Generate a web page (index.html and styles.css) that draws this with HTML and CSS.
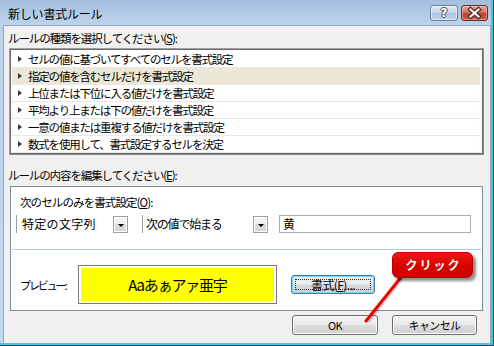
FILE: index.html
```html
<!DOCTYPE html>
<html lang="ja">
<head>
<meta charset="utf-8">
<title>新しい書式ルール</title>
<link rel="stylesheet" href="styles.css">
</head>
<body>
<div class="window">
  <div class="titlebar">
    <span class="title">新しい書式ルール</span>
    <div class="tb-buttons">
      <span class="tb-help">?</span>
      <span class="tb-close">
        <svg width="27" height="16" viewBox="0 0 27 16">
          <path d="M9.5 4.5 L17.5 11.5 M17.5 4.5 L9.5 11.5" stroke="#4a2a26" stroke-width="4.5" stroke-linecap="square" fill="none"/>
          <path d="M9.5 4.5 L17.5 11.5 M17.5 4.5 L9.5 11.5" stroke="#ffffff" stroke-width="2.2" stroke-linecap="square" fill="none"/>
        </svg>
      </span>
    </div>
  </div>
  <div class="client">
    <div class="label l1">ルールの種類を選択してください(<u>S</u>):</div>
    <div class="listbox">
      <div class="row"><span class="tri"></span>セルの値に基づいてすべてのセルを書式設定</div>
      <div class="row sel"><span class="tri"></span>指定の値を含むセルだけを書式設定</div>
      <div class="row"><span class="tri"></span>上位または下位に入る値だけを書式設定</div>
      <div class="row"><span class="tri"></span>平均より上または下の値だけを書式設定</div>
      <div class="row"><span class="tri"></span>一意の値または重複する値だけを書式設定</div>
      <div class="row"><span class="tri"></span>数式を使用して、書式設定するセルを決定</div>
    </div>
    <div class="label l2">ルールの内容を編集してください(<u>E</u>):</div>
    <div class="group">
      <div class="g-label">次のセルのみを書式設定(<u>O</u>):</div>
      <div class="controls">
        <div class="combo c1"><span class="combo-text">特定の文字列</span><span class="dd"><span class="dd-arrow"></span></span></div>
        <div class="combo c2"><span class="combo-text">次の値で始まる</span><span class="dd"><span class="dd-arrow"></span></span></div>
        <div class="textbox">黄</div>
      </div>
      <div class="sep"></div>
      <div class="preview-row">
        <span class="p-label">プレビュー:</span>
        <div class="preview-box"><div class="preview-inner">Aaあぁアァ亜宇</div></div>
        <button class="btn btn-format">書式(<u>F</u>)...</button>
      </div>
    </div>
    <div class="dialog-buttons">
      <button class="btn btn-ok">OK</button>
      <button class="btn btn-cancel">キャンセル</button>
    </div>
  </div>
  <svg class="pointer" width="494" height="346" viewBox="0 0 494 346">
    <line x1="404" y1="276" x2="368" y2="322" stroke="rgba(0,0,0,0.18)" stroke-width="3"/>
    <line x1="402" y1="276" x2="366" y2="321" stroke="#f20000" stroke-width="3" stroke-linecap="round"/>
  </svg>
  <div class="callout">クリック</div>
</div>
</body>
</html>
```

FILE: styles.css
```css
* { box-sizing: border-box; }
html, body {
  margin: 0;
  padding: 0;
  background: #ffffff;
}
body {
  font-family: "Noto Sans CJK JP", "Noto Sans", sans-serif;
  font-size: 11.5px;
  color: #000;
}
.window {
  position: relative;
  width: 494px;
  height: 346px;
  background: linear-gradient(#a3bedd 0px, #bcd3eb 24px, #c2d8ee 100%);
  box-shadow: inset -1px -1px 0 #34414f, inset -3px -3px 0 #45c3ee;
  display: flex;
  flex-direction: column;
}
.titlebar {
  height: 25px;
  display: flex;
  justify-content: space-between;
  align-items: flex-start;
  padding-left: 8px;
  padding-right: 6px;
}
.title {
  margin-top: 6px;
  font-size: 12px;
  line-height: 16px;
  letter-spacing: -0.2px;
  color: #000;
}
.tb-buttons {
  display: flex;
  gap: 3px;
  margin-top: 5px;
}
.tb-help {
  width: 28px;
  height: 16px;
  border: 1px solid #6b7f9c;
  border-radius: 3px;
  background: linear-gradient(#e2ebf6 0%, #c6d7ec 45%, #aec4e1 55%, #bcd1ea 100%);
  box-shadow: inset 0 0 0 1px rgba(255,255,255,0.55);
  color: #ffffff;
  font-family: "DejaVu Sans", sans-serif;
  font-weight: bold;
  font-size: 12px;
  line-height: 14px;
  text-align: center;
  text-shadow: -1px 0 #4c5560, 1px 0 #4c5560, 0 -1px #4c5560, 0 1px #4c5560;
}
.tb-close {
  width: 27px;
  height: 16px;
  border: 1px solid #6e2a22;
  border-radius: 3px;
  background: linear-gradient(#e8a79c 0%, #d5705f 45%, #c23d2c 55%, #d2604a 100%);
  box-shadow: inset 0 0 0 1px rgba(255,220,210,0.45);
  display: flex;
  align-items: center;
  justify-content: center;
  overflow: hidden;
}
.tb-close svg { display: block; margin: -1px; }
.client {
  margin: 0 3px 3px 3px;
  height: 318px;
  background: #f0f0f0;
  border: 1px solid #93a8c0;
  border-bottom: none;
  padding: 0 6px 0 5px;
  display: flex;
  flex-direction: column;
}
.label {
  height: 14px;
  line-height: 14px;
  margin-left: -1px;
  letter-spacing: -1.1px;
  white-space: nowrap;
}
.label u, .g-label u, .btn u { text-decoration: underline; text-underline-offset: 1px; }
.l1 { margin-top: 5px; }
.l2 { margin-top: 13px; }
.listbox {
  margin-top: 3px;
  height: 107px;
  border: 1px solid #a0a0a0;
  border-right-color: #8a8a8a;
  border-bottom-color: #8a8a8a;
  box-shadow: inset 1px 1px 0 #6a6a6a, inset -1px -1px 0 #6a6a6a;
  background: #ffffff;
  padding: 2px 2px 0 2px;
}
.row {
  height: 17px;
  border-bottom: 1px solid #e8e8e8;
  display: flex;
  align-items: center;
  padding-left: 6px;
  margin-right: 1px;
  letter-spacing: -1.2px;
  white-space: nowrap;
  line-height: 16px;
}
.row.sel {
  background: #ebe8d7;
}
.tri {
  width: 0;
  height: 0;
  border-left: 4px solid #3a3a3a;
  border-top: 3px solid transparent;
  border-bottom: 3px solid transparent;
  margin-right: 6px;
  flex: none;
}
.group {
  margin: 4px 1px 0 1px;
  border: 1px solid #838a93;
  background: #ffffff;
  padding: 0 0 6px 0;
}
.g-label {
  margin-top: 8px;
  padding-left: 9px;
  height: 14px;
  line-height: 14px;
  letter-spacing: -0.9px;
  white-space: nowrap;
}
.controls {
  margin-top: 6px;
  padding-left: 5px;
  display: flex;
  height: 18px;
}
.combo {
  display: flex;
  align-items: center;
  height: 18px;
  border-left: 1px solid #9c9c9c;
  background: #ffffff;
}
.combo-text {
  flex: 1;
  font-size: 12px;
  line-height: 16px;
  white-space: nowrap;
}
.c1 { width: 112px; }
.c1 .combo-text { padding-left: 5px; letter-spacing: 0.3px; }
.c2 { width: 126px; margin-left: 14px; }
.c2 .combo-text { padding-left: 3px; letter-spacing: -1.2px; }
.dd {
  width: 15px;
  height: 17px;
  border: 1px solid #9f9f9f;
  box-shadow: inset 0 0 0 1px #ffffff;
  background: linear-gradient(#f4f4f4 0%, #eeeeee 50%, #dddddd 50%, #d3d3d3 100%);
  display: flex;
  align-items: center;
  justify-content: center;
  flex: none;
}
.dd-arrow {
  width: 0;
  height: 0;
  border-top: 3px solid #000;
  border-left: 3px solid transparent;
  border-right: 3px solid transparent;
  margin-top: 2px;
}
.textbox {
  margin-left: 11px;
  width: 192px;
  height: 18px;
  border: 1px solid #abadb3;
  padding-left: 3px;
  font-size: 12px;
  line-height: 16px;
}
.sep {
  margin: 16px 1px 0 1px;
  height: 1px;
  background: #a9cdea;
}
.preview-row {
  margin-top: 15px;
  height: 39px;
  display: flex;
  align-items: center;
  padding-left: 9px;
}
.p-label {
  width: 58px;
  font-size: 11px;
  letter-spacing: -2.1px;
  white-space: nowrap;
}
.preview-box {
  width: 199px;
  height: 39px;
  border: 1px solid #7a7a7a;
  padding: 2px;
  background: #ffffff;
}
.preview-inner {
  height: 100%;
  background: #ffff00;
  display: flex;
  align-items: center;
  justify-content: center;
  font-size: 15px;
  letter-spacing: -1.2px;
  white-space: nowrap;
}
.btn {
  font-family: "Noto Sans CJK JP", "Noto Sans", sans-serif;
  font-size: 11px;
  letter-spacing: -0.6px;
  color: #000;
  padding: 0;
  height: 20px;
  line-height: 16px;
  border: 1px solid #707070;
  border-radius: 3px;
  background: linear-gradient(#f3f3f3 0%, #ebebeb 48%, #dddddd 52%, #cfcfcf 100%);
  box-shadow: inset 0 0 0 1px #fbfbfb;
  position: relative;
}
.btn-format {
  margin-left: 14px;
  width: 84px;
  height: 19px;
  font-size: 12px;
  border-color: #3c7fb1;
  box-shadow: inset 0 0 0 1px #78d7f8;
  background: linear-gradient(#f0f4f7 0%, #e6ebee 48%, #d6dadd 52%, #cbd0d3 100%);
}
.btn-format::after {
  content: "";
  position: absolute;
  left: 3px;
  right: 3px;
  top: 3px;
  bottom: 3px;
  border: 1px dotted #303030;
}
.dialog-buttons {
  margin-top: 4px;
  display: flex;
  justify-content: flex-end;
  gap: 14px;
  padding-right: 7px;
}
.btn-ok { width: 86px; }
.btn-cancel { width: 85px; }
.pointer {
  position: absolute;
  left: 0;
  top: 0;
  pointer-events: none;
}
.callout {
  position: absolute;
  left: 392px;
  top: 252px;
  width: 81px;
  height: 26px;
  border-radius: 6px;
  border: 1px solid #b80000;
  background: linear-gradient(#f01818 0%, #dd0000 50%, #cc0000 100%);
  box-shadow: 3px 3px 3px rgba(0,0,0,0.45);
  color: #ffffff;
  font-weight: bold;
  font-size: 12px;
  letter-spacing: 2px;
  line-height: 24px;
  text-align: center;
  padding-left: 2px;
}
```
